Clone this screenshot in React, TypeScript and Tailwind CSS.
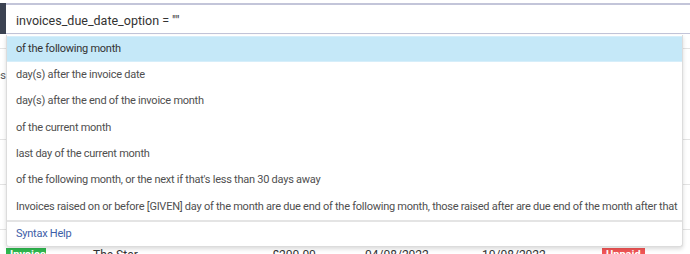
const OPTIONS = [
  "of the following month",
  "day(s) after the invoice date",
  "day(s) after the end of the invoice month",
  "of the current month",
  "last day of the current month",
  "of the following month, or the next if that's less than 30 days away",
  "Invoices raised on or before [GIVEN] day of the month are due end of the following month, those raised after are due end of the month after that",
];

export default function App() {
  return (
    <div className="relative h-[254px] w-[690px] overflow-hidden bg-white font-['Roboto',sans-serif] text-[#333]">
      <div className="h-[3px]" />
      <div className="flex h-[31px]">
        <div className="w-[6px] bg-[#3b4251]" />
        <div className="flex flex-1 items-center border-t-2 border-b border-[#c3c5d9] pt-[4px] pl-[10px] text-[12.5px] text-[#333]">
          invoices_due_date_option = ""
        </div>
      </div>

      {/* table behind the dropdown */}
      <div className="flex flex-col">
        <div className="h-[15px] border-b border-[#e3e3e3]" />
        <div className="flex h-[90px] items-start">
          <div className="mt-[19px] flex w-[6px] justify-end overflow-hidden">
            <span className="text-[11px] whitespace-nowrap text-[#555]">Notes</span>
          </div>
        </div>
        <div className="h-[45px] border-t border-[#e3e3e3]" />
        <div className="h-[45px] border-t border-[#e3e3e3]" />
        <div className="flex h-[30px] items-start border-t border-[#e3e3e3] pt-[18px] text-[12px] leading-[14px] text-[#333]">
          <span className="ml-[6px] w-[40px] bg-[#2fb84f] px-[4px] text-[11px] font-bold text-white">Invoiced</span>
          <span className="ml-[47px] w-[179px]">The Star</span>
          <span className="w-[93px]">£200.00</span>
          <span className="w-[117px]">04/08/2022</span>
          <span className="w-[120px]">10/08/2022</span>
          <span className="bg-[#f05555] px-[4px] text-[11px] font-bold text-white">Unpaid</span>
        </div>
      </div>

      {/* suggestions dropdown */}
      <div className="absolute top-[35px] left-[6px] w-[677px] rounded-b-[3px] border border-t-0 border-[#dcdcdc] bg-white pt-[1px] text-[11px] tracking-[-0.25px] shadow-[0_2px_4px_rgba(0,0,0,0.15)]">
        {OPTIONS.map((opt, i) => (
          <div
            key={opt}
            className={
              i === 0
                ? "flex h-[26.3px] items-center border-y border-[#d6eefa] bg-[#c5e8f8] px-[9px] whitespace-nowrap text-[#333]"
                : "flex h-[26.3px] items-center px-[9px] whitespace-nowrap text-[#4f4f4f]"
            }
          >
            {opt}
          </div>
        ))}
        <div className="flex h-[26px] items-center border-t-2 border-[#e4e4e4] px-[9px] text-[#3d5ea8]">
          Syntax Help
        </div>
      </div>
    </div>
  );
}
